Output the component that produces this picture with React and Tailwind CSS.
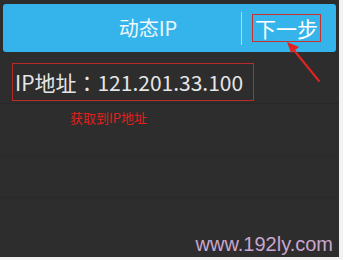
import React from 'react';

const cjk = { fontFamily: '"Noto Sans CJK SC", "Noto Sans", sans-serif' };

const Arrow = () => (
  <svg className="absolute left-0 top-0 pointer-events-none" width="343" height="260" viewBox="0 0 343 260">
    <line x1="319" y1="81" x2="293" y2="49" stroke="#e3231f" strokeWidth="2" strokeLinecap="round" />
    <polygon points="287,42 299,47 291,53" fill="#e3231f" />
  </svg>
);

const App = () => {
  return (
    <div className="relative w-[343px] h-[260px] bg-[#f2f2f2] overflow-hidden" style={cjk}>
      <div className="flex flex-col w-[339px] h-[257px] bg-[#2d2d2d]">
        <div className="h-[52px] pt-[4px] px-[3px]">
          <div className="flex items-center h-[48px] rounded-[3px] bg-[#35b4ec]">
            <div className="flex justify-center w-[238px] pl-[52px] text-[20px] leading-[24px] text-[#eef8fd]">
              动态IP
            </div>
            <div className="w-px h-[33px] bg-[#a9dcf5]" />
            <div className="ml-[10px] flex items-center h-[28px] px-[2px] border border-[#c8302c] text-[21px] leading-[24px] text-white">
              下一步
            </div>
          </div>
        </div>

        <div className="h-[51px] pt-[11px] pl-[12px]">
          <div className="flex items-center w-[242px] h-[38px] pl-[2px] border border-[#b92a28] text-[21px] leading-[24px] text-[#e6e6e6] whitespace-nowrap">
            IP地址<span style={{ fontFamily: '"Noto Sans CJK TC", sans-serif' }}>：</span>121.201.33.100
          </div>
        </div>
        <div className="h-px bg-[#272727]" />

        <div className="h-[51px] pt-[6px] pl-[70px] text-[13px] leading-[16px] text-[#e0201c]">
          获取到IP地址
        </div>
        <div className="h-px bg-[#292929]" />

        <div className="h-[41px]" />
        <div className="h-px bg-[#292929]" />

        <div className="flex flex-1 items-end justify-end pr-[6px] pb-[3px]">
          <span className="text-[20px] leading-[20px] text-[#c9a6cf]" style={{ fontFamily: '"Liberation Sans", Arial, sans-serif' }}>
            www.192ly.com
          </span>
        </div>
      </div>
      <Arrow />
    </div>
  );
};

export default App;
